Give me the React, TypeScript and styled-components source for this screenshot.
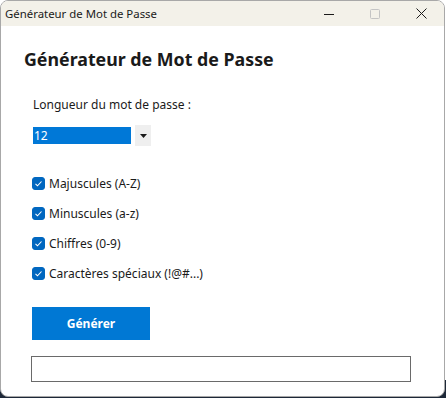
import React, { useState } from 'react';
import styled, { createGlobalStyle } from 'styled-components';

const GlobalStyle = createGlobalStyle`
  html, body {
    margin: 0;
    padding: 0;
  }
  body {
    width: 446px;
    height: 398px;
    overflow: hidden;
    background: linear-gradient(to bottom, #ffffff 0 380px, #1d2838 380px);
    font-family: "Noto Sans", "Open Sans", sans-serif;
  }
`;

const Window = styled.div`
  box-sizing: border-box;
  width: 445px;
  height: 397px;
  border: 1px solid #a8a8a8;
  border-radius: 8px;
  overflow: hidden;
  background: #ffffff;
  display: flex;
  flex-direction: column;
`;

const TitleBar = styled.div`
  height: 25px;
  flex: none;
  background: #f3f1e9;
  display: flex;
  align-items: center;
  padding-left: 4px;
`;

const TitleText = styled.span`
  flex: 1;
  font-size: 11.4px;
  color: #1a1a1a;
  line-height: 16px;
  padding-top: 1px;
`;

const Controls = styled.div`
  display: flex;
  height: 100%;
`;

const ControlButton = styled.div`
  width: 46px;
  height: 100%;
  display: flex;
  align-items: center;
  justify-content: center;
`;

const Content = styled.div`
  display: flex;
  flex-direction: column;
  padding: 21px 0 0 23px;
`;

const Heading = styled.h1`
  margin: 0;
  font-size: 17.8px;
  font-weight: 700;
  color: #1a1a1a;
  line-height: 24px;
`;

const Form = styled.div`
  display: flex;
  flex-direction: column;
  padding-left: 8px;
`;

const Label = styled.div`
  margin-top: 26px;
  margin-left: 1px;
  font-size: 12px;
  line-height: 16px;
  color: #1a1a1a;
`;

const Combo = styled.div`
  margin-top: 12px;
  margin-left: 1px;
  display: flex;
  align-items: center;
  gap: 4px;
`;

const ComboField = styled.div`
  width: 97px;
  height: 17px;
  background: #0078d7;
  color: #ffffff;
  font-size: 12px;
  line-height: 17px;
  padding-left: 1px;
`;

const ComboArrow = styled.div`
  width: 16px;
  height: 21px;
  background: #efefef;
  display: flex;
  align-items: center;
  justify-content: center;
`;

const Options = styled.div`
  margin-top: 31px;
  display: flex;
  flex-direction: column;
  gap: 17px;
`;

const OptionRow = styled.label`
  display: flex;
  align-items: center;
  gap: 4px;
  height: 13px;
  font-size: 12px;
  color: #1a1a1a;
  cursor: default;
`;

const Box = styled.span<{ $checked: boolean }>`
  width: 13px;
  height: 13px;
  flex: none;
  box-sizing: border-box;
  border-radius: 3px;
  background: ${p => (p.$checked ? '#0067c0' : '#ffffff')};
  border: 1px solid ${p => (p.$checked ? '#0067c0' : '#7a7a7a')};
  display: flex;
  align-items: center;
  justify-content: center;
`;

const OptionText = styled.span`
  line-height: 16px;
`;

const GenerateButton = styled.button`
  margin-top: 27px;
  width: 118px;
  height: 33px;
  border: none;
  background: #0078d4;
  color: #ffffff;
  font-family: inherit;
  font-size: 12px;
  font-weight: 700;
  padding: 0;
`;

const Output = styled.input`
  margin-top: 16px;
  box-sizing: border-box;
  width: 380px;
  height: 26px;
  border: 1px solid #6a6a6a;
  border-radius: 0;
  outline: none;
  font-family: inherit;
  font-size: 12px;
  padding: 0 4px;
  margin-left: -1px;
`;

const options = [
  'Majuscules (A-Z)',
  'Minuscules (a-z)',
  'Chiffres (0-9)',
  'Caractères spéciaux (!@#...)',
];

export default function App() {
  const [checked, setChecked] = useState<boolean[]>([true, true, true, true]);

  const toggle = (i: number) =>
    setChecked(prev => prev.map((v, j) => (j === i ? !v : v)));

  return (
    <>
      <GlobalStyle />
      <Window>
        <TitleBar>
          <TitleText>Générateur de Mot de Passe</TitleText>
          <Controls>
            <ControlButton>
              <svg width="10" height="10" viewBox="0 0 10 10">
                <path d="M0 5.5h10" stroke="#1a1a1a" strokeWidth="1" />
              </svg>
            </ControlButton>
            <ControlButton>
              <svg width="10" height="10" viewBox="0 0 10 10">
                <rect x="0.5" y="0.5" width="9" height="9" rx="1" fill="none" stroke="#c4c4c4" />
              </svg>
            </ControlButton>
            <ControlButton>
              <svg width="11" height="11" viewBox="0 0 11 11">
                <path d="M0.5 0.5l10 10M10.5 0.5l-10 10" stroke="#1a1a1a" strokeWidth="1" />
              </svg>
            </ControlButton>
          </Controls>
        </TitleBar>
        <Content>
          <Heading>Générateur de Mot de Passe</Heading>
          <Form>
            <Label>Longueur du mot de passe :</Label>
            <Combo>
              <ComboField>12</ComboField>
              <ComboArrow>
                <svg width="7" height="4" viewBox="0 0 7 4">
                  <path d="M0 0h7L3.5 4z" fill="#1a1a1a" />
                </svg>
              </ComboArrow>
            </Combo>
            <Options>
              {options.map((text, i) => (
                <OptionRow key={text} onClick={() => toggle(i)}>
                  <Box $checked={checked[i]}>
                    {checked[i] && (
                      <svg width="9" height="9" viewBox="0 0 9 9">
                        <path d="M1.5 4.8l2 2 4-4.3" fill="none" stroke="#ffffff" strokeWidth="1.1" />
                      </svg>
                    )}
                  </Box>
                  <OptionText>{text}</OptionText>
                </OptionRow>
              ))}
            </Options>
            <GenerateButton>Générer</GenerateButton>
            <Output readOnly value="" />
          </Form>
        </Content>
      </Window>
    </>
  );
}
